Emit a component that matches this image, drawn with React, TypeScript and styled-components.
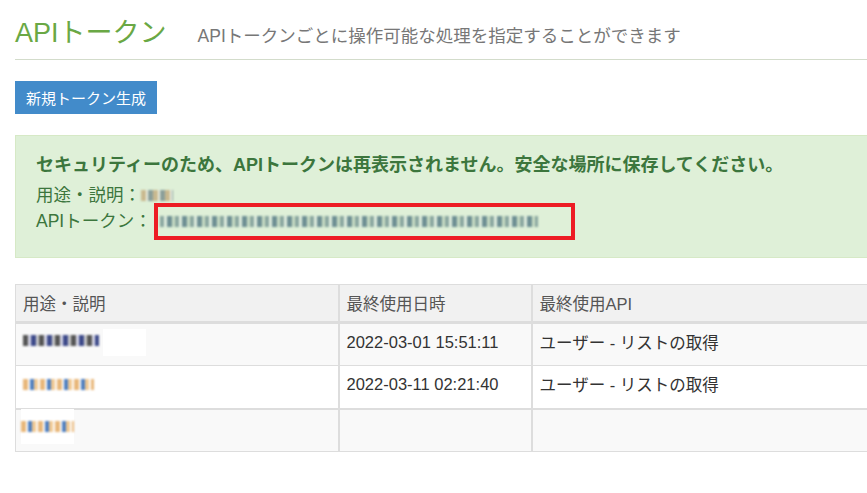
import styled, { createGlobalStyle } from 'styled-components'

const GlobalStyle = createGlobalStyle`
  body {
    margin: 0;
    background: #fff;
    font-family: "Liberation Sans", "Noto Sans CJK JP", sans-serif;
    color: #333;
  }
`

const Page = styled.div`
  box-sizing: border-box;
  width: 100%;
  padding-left: 15px;
  overflow: hidden;
`

const Header = styled.header`
  display: flex;
  align-items: baseline;
  gap: 31px;
  padding-top: 13px;
  padding-bottom: 6px;
  border-bottom: 1px solid #d3dccb;
`

const Title = styled.h1`
  margin: 0;
  font-size: 27px;
  font-weight: 400;
  line-height: 40px;
  color: #6aa845;
`

const Subtitle = styled.span`
  font-size: 17.5px;
  color: #777;
  white-space: nowrap;
`

const Button = styled.button`
  margin-top: 21px;
  height: 33px;
  padding: 0 11px;
  border: none;
  border-radius: 0;
  background: #428bca;
  color: #fff;
  font-family: inherit;
  font-size: 15px;
`

const Alert = styled.div`
  margin-top: 21px;
  padding: 16px 20px 18px;
  background: #dff0d8;
  border: 1px solid #d6e9c6;
  border-right: none;
  color: #3c763d;
  font-size: 17.5px;
`

const AlertHead = styled.div`
  font-size: 18px;
  font-weight: 700;
  line-height: 26px;
  white-space: nowrap;
`

const AlertLine = styled.div<{ $boxed?: boolean }>`
  display: flex;
  align-items: center;
  line-height: 20px;
  margin-top: ${p => (p.$boxed ? '-2px' : '7px')};
  height: ${p => (p.$boxed ? '36px' : 'auto')};
`

const TokenBox = styled.span`
  box-sizing: border-box;
  display: flex;
  align-items: center;
  width: 421px;
  height: 37px;
  margin-left: 2px;
  padding-left: 2px;
  border: 4px solid #ed1c24;
`

const Redacted = styled.span<{ $w: number; $tone: 'token' | 'label' | 'mono' | 'warm' }>`
  display: inline-block;
  width: ${p => p.$w}px;
  height: 11px;
  filter: blur(1.2px);
  background: ${p =>
    p.$tone === 'token'
      ? 'repeating-linear-gradient(90deg, #8aa7a0 0 4px, #e2efe0 4px 7px, #6d8f93 7px 12px, #c9ddc4 12px 15px)'
      : p.$tone === 'label'
        ? 'repeating-linear-gradient(90deg, #c9b98f 0 5px, #eef2e6 5px 7px, #8b9f9a 7px 12px)'
        : p.$tone === 'mono'
          ? 'repeating-linear-gradient(90deg, #555 0 5px, #d8d8e8 5px 8px, #3d4a8a 8px 13px, #ccc 13px 16px)'
          : 'repeating-linear-gradient(90deg, #e8b77a 0 5px, #fff 5px 7px, #4f7fc0 7px 11px, #f0c993 11px 15px, #fff 15px 17px)'};
`

const Mask = styled.span<{ $w: number; $h: number }>`
  display: inline-flex;
  align-items: center;
  width: ${p => p.$w}px;
  height: ${p => p.$h}px;
  background: #fff;
  vertical-align: middle;
`

const Table = styled.table`
  margin-top: 26px;
  width: 100%;
  border-collapse: collapse;
  table-layout: fixed;
  font-size: 16.5px;
`

const Th = styled.th<{ $w?: number }>`
  box-sizing: border-box;
  width: ${p => (p.$w ? `${p.$w}px` : 'auto')};
  height: 38px;
  padding: 0 7px;
  text-align: left;
  font-weight: 400;
  color: #555;
  background: #f1f1f1;
  border: 1px solid #ddd;
  border-bottom: 3px solid #ddd;
  border-right-width: 2px;

  &:last-child {
    border-right: none;
  }
`

const Tr = styled.tr<{ $striped?: boolean; $split?: boolean }>`
  background: ${p => (p.$striped ? '#f9f9f9' : '#fff')};
  border-top: ${p => (p.$split ? '2px' : '1px')} solid #ddd;
`

const Td = styled.td`
  box-sizing: border-box;
  height: 43px;
  padding: 0 7px 5px;
  border: 1px solid #ddd;
  border-right-width: 2px;
  color: #333;

  &:last-child {
    border-right: none;
  }
`

const rows = [
  { date: '2022-03-01 15:51:11', api: 'ユーザー - リストの取得' },
  { date: '2022-03-11 02:21:40', api: 'ユーザー - リストの取得' },
  { date: '', api: '' },
]

export default function App() {
  return (
    <Page>
      <GlobalStyle />
      <Header>
        <Title>APIトークン</Title>
        <Subtitle>APIトークンごとに操作可能な処理を指定することができます</Subtitle>
      </Header>

      <Button>新規トークン生成</Button>

      <Alert>
        <AlertHead>
          セキュリティーのため、APIトークンは再表示されません。安全な場所に保存してください。
        </AlertHead>
        <AlertLine>
          用途・説明：<Redacted $w={32} $tone="label" />
        </AlertLine>
        <AlertLine $boxed>
          APIトークン：
          <TokenBox>
            <Redacted $w={378} $tone="token" />
          </TokenBox>
        </AlertLine>
      </Alert>

      <Table>
        <thead>
          <tr>
            <Th $w={323}>用途・説明</Th>
            <Th $w={193}>最終使用日時</Th>
            <Th>最終使用API</Th>
          </tr>
        </thead>
        <tbody>
          {rows.map((row, i) => (
            <Tr key={i} $striped={i % 2 === 0} $split={i === 2}>
              <Td>
                {i === 0 && (
                  <>
                    <Redacted $w={76} $tone="mono" />
                    <Mask $w={43} $h={27} style={{ marginLeft: 4 }} />
                  </>
                )}
                {i === 1 && <Redacted $w={71} $tone="warm" />}
                {i === 2 && (
                  <Mask $w={53} $h={35} style={{ marginLeft: -2, marginTop: -2 }}>
                    <Redacted $w={53} $tone="warm" />
                  </Mask>
                )}
              </Td>
              <Td>{row.date}</Td>
              <Td>{row.api}</Td>
            </Tr>
          ))}
        </tbody>
      </Table>
    </Page>
  )
}
